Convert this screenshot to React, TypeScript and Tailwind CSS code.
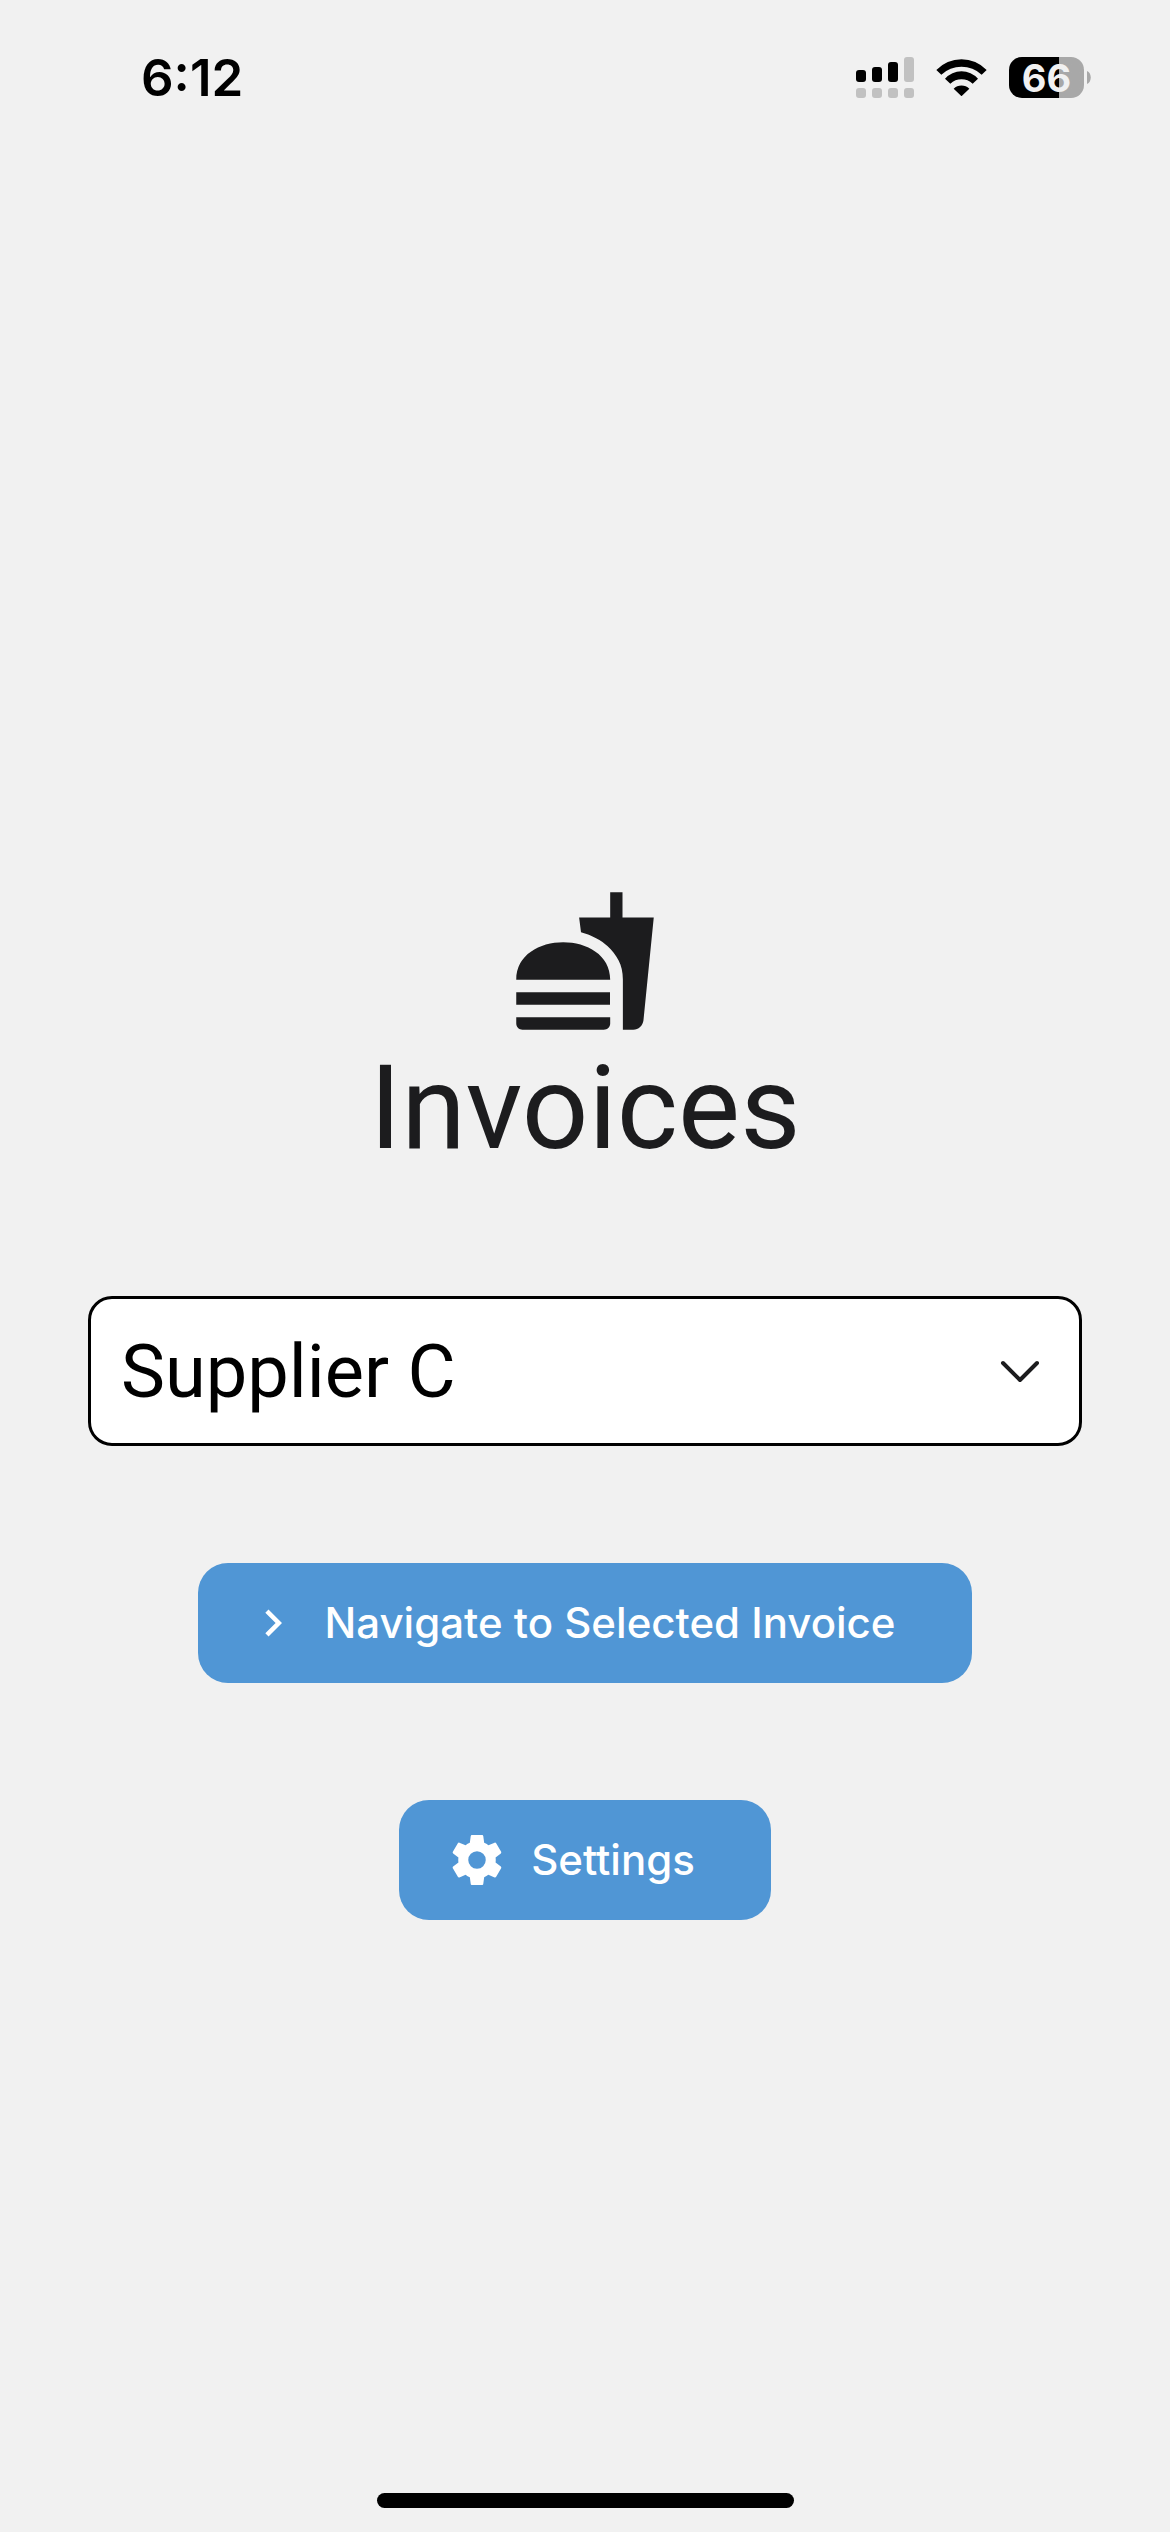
import type { ReactNode } from "react";

function Signal() {
  return (
    <svg viewBox="0 0 58 41" className="h-[41px] w-[58px]" aria-hidden="true">
      <g fill="#000">
        <rect x="0" y="13" width="10" height="12" rx="3" />
        <rect x="16" y="10" width="10" height="15" rx="3" />
        <rect x="32" y="5" width="10" height="20" rx="3" />
      </g>
      <g fill="#c1c1c1">
        <rect x="48" y="0" width="10" height="25" rx="3" />
        <rect x="0" y="31" width="10" height="10" rx="3" />
        <rect x="16" y="31" width="10" height="10" rx="3" />
        <rect x="32" y="31" width="10" height="10" rx="3" />
        <rect x="48" y="31" width="10" height="10" rx="3" />
      </g>
    </svg>
  );
}

function Wifi() {
  return (
    <svg viewBox="288 51 153 123" className="h-[41px] w-[51px]" aria-hidden="true">
      <path d="M289 90A104 104 0 0 1 440 90L425 104A88 88 0 0 0 304 104Z" />
      <path d="M315 116A66 66 0 0 1 414 116L398 131A50 50 0 0 0 331 131Z" />
      <path d="M341 146A33 33 0 0 1 388 146L366 167Q364.500 169 363 167Z" />
    </svg>
  );
}

function Battery() {
  return (
    <div className="flex items-center gap-[3px]">
      <div className="flex h-[41px] w-[75px] items-center justify-center rounded-[13px] bg-linear-to-r from-black from-[67%] to-[#a8a8a8] to-[67%] text-[38px] leading-none font-bold text-[#f1f1f1]">
        66
      </div>
      <svg viewBox="0 0 4 13" className="h-[13px] w-1" aria-hidden="true">
        <path d="M0 0C5 2 5 11 0 13Z" fill="#a8a8a8" />
      </svg>
    </div>
  );
}

function ActionButton({ icon, children }: { icon: ReactNode; children: ReactNode }) {
  return (
    <button
      type="button"
      className="flex h-[120px] items-center gap-6 rounded-[30px] bg-[#5096d5] pr-[76px] pl-12 text-[42px] leading-[60px] font-medium text-white"
    >
      {icon}
      {children}
    </button>
  );
}

export default function App() {
  return (
    <div className="flex min-h-screen flex-col bg-[#f1f1f1] font-['Inter','Liberation_Sans',sans-serif] text-black">
      <header className="flex h-[155px] items-center justify-between pr-[79px] pl-[141px]">
        <time className="text-[51px] leading-[60px] font-semibold">6:12</time>
        <div className="flex items-center gap-[22px]">
          <Signal />
          <Wifi />
          <Battery />
        </div>
      </header>

      <main className="flex flex-1 flex-col items-center px-[88px] pt-[731px]">
        <svg viewBox="0 0 24 24" className="size-[150px] fill-[#1c1c1e]" aria-hidden="true">
          <path d="M18.060 23H19.720C20.560 23 21.250 22.350 21.350 21.530L23 5.050H18V1H16.030V5.050H11.060L11.360 7.390C13.070 7.860 14.670 8.710 15.630 9.650C17.070 11.070 18.060 12.540 18.060 14.940V23M1 22V21H16.030V22C16.030 22.540 15.580 23 15 23H2C1.450 23 1 22.540 1 22M16.030 15C16.030 7 1 7 1 15H16.030M1 17H16V19H1V17Z" />
        </svg>
        <h1 className="font-['Roboto','Liberation_Sans',sans-serif] text-[117px] leading-[144px] text-[#1c1c1e]">Invoices</h1>

        <div className="relative mt-[116px] w-full">
          <select
            aria-label="Supplier"
            className="h-[150px] w-full appearance-none rounded-[24px] border-3 border-black bg-white px-[30px] font-['Roboto','Liberation_Sans',sans-serif] text-[74px]"
          >
            <option>Supplier C</option>
          </select>
          <svg
            viewBox="0 0 40 24"
            className="pointer-events-none absolute top-[63px] right-[42px] h-6 w-10 fill-none stroke-[#1c1c1e] stroke-4"
            strokeLinecap="round"
            strokeLinejoin="round"
            aria-hidden="true"
          >
            <path d="M3 4L20 21L37 4" />
          </svg>
        </div>

        <div className="mt-[117px] flex flex-col items-center gap-[117px]">
          <ActionButton
            icon={
              <svg viewBox="0 0 24 24" className="size-[54px] fill-white" aria-hidden="true">
                <path d="M8.590 16.580L13.170 12L8.590 7.410L10 6L16 12L10 18L8.590 16.580Z" />
              </svg>
            }
          >
            Navigate to Selected Invoice
          </ActionButton>
          <ActionButton
            icon={
              <svg viewBox="0 0 24 24" className="size-[60px] fill-white" aria-hidden="true">
                <path d="M12,15.5A3.5,3.5 0 0,1 8.5,12A3.5,3.5 0 0,1 12,8.5A3.5,3.5 0 0,1 15.5,12A3.5,3.5 0 0,1 12,15.5M19.43,12.97C19.47,12.65 19.5,12.33 19.5,12C19.5,11.67 19.47,11.34 19.43,11L21.54,9.37C21.73,9.22 21.78,8.95 21.66,8.73L19.66,5.27C19.54,5.05 19.27,4.96 19.05,5.05L16.56,6.05C16.04,5.66 15.5,5.32 14.87,5.07L14.5,2.42C14.46,2.18 14.25,2 14,2H10C9.75,2 9.54,2.18 9.5,2.42L9.13,5.07C8.5,5.32 7.96,5.66 7.44,6.05L4.95,5.05C4.73,4.96 4.46,5.05 4.34,5.27L2.34,8.73C2.21,8.95 2.27,9.22 2.46,9.37L4.57,11C4.53,11.34 4.5,11.67 4.5,12C4.5,12.33 4.53,12.65 4.57,12.97L2.46,14.63C2.27,14.78 2.21,15.05 2.34,15.27L4.34,18.73C4.46,18.95 4.73,19.03 4.95,18.95L7.44,17.94C7.96,18.34 8.5,18.68 9.13,18.93L9.5,21.58C9.54,21.82 9.75,22 10,22H14C14.25,22 14.46,21.82 14.5,21.58L14.87,18.93C15.5,18.67 16.04,18.34 16.56,17.94L19.05,18.95C19.27,19.03 19.54,18.95 19.66,18.73L21.66,15.27C21.78,15.05 21.73,14.78 21.54,14.63L19.43,12.97Z" />
              </svg>
            }
          >
            Settings
          </ActionButton>
        </div>
      </main>

      <footer className="flex justify-center pb-6">
        <div className="h-[15px] w-[417px] rounded-full bg-black" />
      </footer>
    </div>
  );
}
